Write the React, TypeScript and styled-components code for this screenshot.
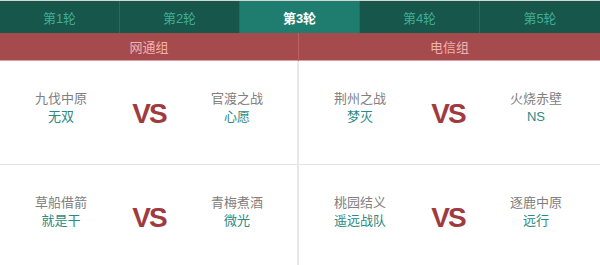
import React from "react";
import styled, { createGlobalStyle } from "styled-components";

const GlobalStyle = createGlobalStyle`
	html, body {
		margin: 0;
		padding: 0;
		background: #fff;
		font-family: "Liberation Sans", "Noto Sans CJK SC", sans-serif;
	}
`;

const Page = styled.div`
	width: 600px;
	height: 265px;
	overflow: hidden;
	border-top: 1px solid #d6d6d6;
	box-sizing: border-box;
`;

const Tabs = styled.div`
	display: grid;
	grid-template-columns: repeat(5, 1fr);
	height: 32px;
	background: #17564a;
`;

const Tab = styled.div<{ $active?: boolean }>`
	display: flex;
	align-items: center;
	justify-content: center;
	font-size: 13px;
	font-weight: ${(p) => (p.$active ? "bold" : "normal")};
	color: ${(p) => (p.$active ? "#ffffff" : "#3fae95")};
	background: ${(p) => (p.$active ? "#1f7d70" : "transparent")};
	border-right: 1px solid #226d5e;
	&:last-child {
		border-right: none;
	}
`;

const Groups = styled.div`
	display: grid;
	grid-template-columns: 299px 301px;
`;

const Group = styled.div<{ $first?: boolean }>`
	display: flex;
	flex-direction: column;
	border-right: ${(p) => (p.$first ? "2px solid #e8e8e8" : "none")};
`;

const GroupHead = styled.div`
	height: 27px;
	display: flex;
	align-items: center;
	justify-content: center;
	font-size: 13px;
	color: #f2b1b1;
	background: #a64b4d;
	border-bottom: 1px solid #d9a0a0;
`;

const HeadWrap = styled.div<{ $first?: boolean }>`
	margin-right: ${(p) => (p.$first ? "-2px" : "0")};
	border-right: ${(p) => (p.$first ? "1px solid #b86264" : "none")};
`;

const Match = styled.div`
	height: 103px;
	display: grid;
	grid-template-columns: 122px 54px 122px;
	align-items: center;
	border-bottom: 1px solid #e2e2e2;
`;

const Team = styled.div`
	display: flex;
	flex-direction: column;
	align-items: center;
	gap: 3px;
	margin-top: -10px;
`;

const TeamName = styled.div`
	font-size: 13px;
	color: #808080;
	line-height: 15px;
`;

const Player = styled.div`
	font-size: 13px;
	color: #2a8a84;
	line-height: 15px;
`;

const Versus = styled.div`
	text-align: center;
	font-family: "Liberation Sans", sans-serif;
	font-weight: bold;
	font-size: 28px;
	letter-spacing: -2px;
	color: #9f3b40;
	margin-top: 2px;
`;

type Side = { name: string; player: string };
type MatchData = [Side, Side];

const groups: { title: string; matches: MatchData[] }[] = [
	{
		title: "网通组",
		matches: [
			[
				{ name: "九伐中原", player: "无双" },
				{ name: "官渡之战", player: "心愿" },
			],
			[
				{ name: "草船借箭", player: "就是干" },
				{ name: "青梅煮酒", player: "微光" },
			],
		],
	},
	{
		title: "电信组",
		matches: [
			[
				{ name: "荆州之战", player: "梦灭" },
				{ name: "火烧赤壁", player: "NS" },
			],
			[
				{ name: "桃园结义", player: "遥远战队" },
				{ name: "逐鹿中原", player: "远行" },
			],
		],
	},
];

const rounds = ["第1轮", "第2轮", "第3轮", "第4轮", "第5轮"];

export default function App() {
	return (
		<>
			<GlobalStyle />
			<Page>
				<Tabs>
					{rounds.map((r, i) => (
						<Tab key={r} $active={i === 2}>
							{r}
						</Tab>
					))}
				</Tabs>
				<Groups>
					{groups.map((g, gi) => (
						<Group key={g.title} $first={gi === 0}>
							<HeadWrap $first={gi === 0}>
								<GroupHead>{g.title}</GroupHead>
							</HeadWrap>
							{g.matches.map((m, mi) => (
								<Match key={mi}>
									<Team>
										<TeamName>{m[0].name}</TeamName>
										<Player>{m[0].player}</Player>
									</Team>
									<Versus>VS</Versus>
									<Team>
										<TeamName>{m[1].name}</TeamName>
										<Player>{m[1].player}</Player>
									</Team>
								</Match>
							))}
						</Group>
					))}
				</Groups>
			</Page>
		</>
	);
}
